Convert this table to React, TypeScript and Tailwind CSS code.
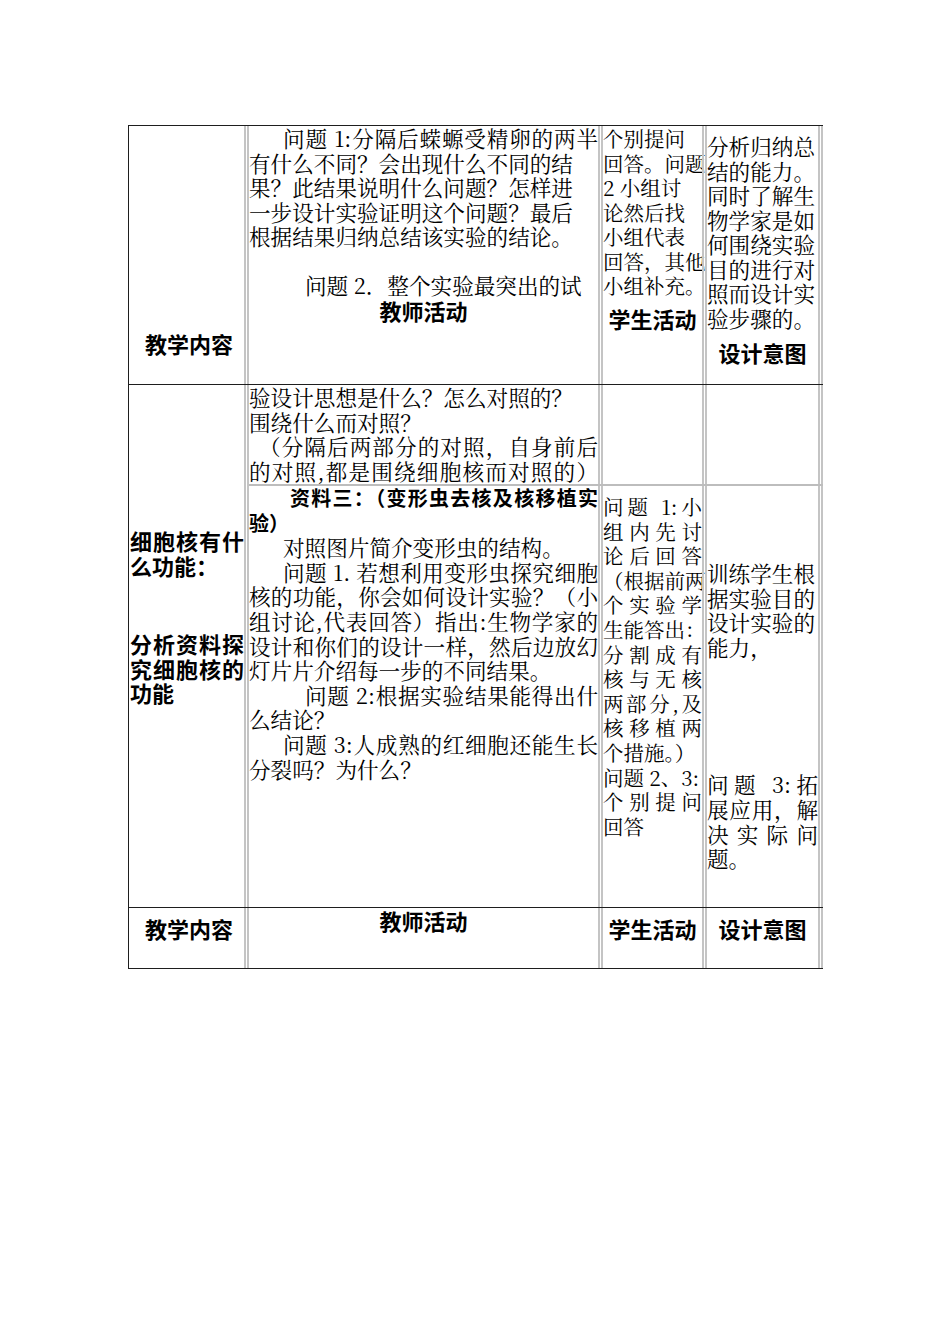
import type { ReactNode } from "react";

const SERIF = "font-['Noto_Serif_CJK_SC','Noto_Sans_CJK_SC','Liberation_Serif',serif]";
const HEAD = "font-['Noto_Sans_CJK_SC','Liberation_Sans',sans-serif] font-bold text-[22px]";

// double grey rule between columns
function Sep() {
  return <div className="w-[5px] shrink-0 self-stretch border-x-2 border-[#c4c4c4]" />;
}

// one printed line; justified lines are stretched to the cell width
function L({ children, j = false, c = "" }: { children: ReactNode; j?: boolean; c?: string }) {
  return (
    <div className={(j ? "text-justify [text-align-last:justify] " : "whitespace-nowrap ") + c}>
      {children}
    </div>
  );
}

export default function App() {
  return (
    <div className="min-h-screen bg-white pt-[125px] pl-[128px] text-black">
      <div className="w-[695px] border-t border-l border-[#1e1e1e]">
        {/* Row 1 */}
        <div className="flex h-[259px] border-b border-[#1e1e1e]">
          <div className={`w-[115px] shrink-0 pt-[205px] pl-[16px] leading-[24.5px] ${HEAD}`}>教学内容</div>
          <Sep />
          <div className={`w-[349px] shrink-0 text-[21.6px] leading-[24.5px] ${SERIF}`}>
            <L j c="pl-[34px]">问题 1:分隔后蝾螈受精卵的两半</L>
            <L>有什么不同？会出现什么不同的结</L>
            <L>果？此结果说明什么问题？怎样进</L>
            <L>一步设计实验证明这个问题？最后</L>
            <L>根据结果归纳总结该实验的结论。</L>
            <div className="h-[24.5px]" />
            <L c="pl-[56px]">问题 2．整个实验最突出的试</L>
            <div className={`text-center ${HEAD}`}>教师活动</div>
          </div>
          <Sep />
          <div className={`w-[99px] shrink-0 text-[20.5px] leading-[24.5px] ${SERIF}`}>
            <L>个别提问</L>
            <L>回答。问题</L>
            <L>2 小组讨</L>
            <L>论然后找</L>
            <L>小组代表</L>
            <L>回答，其他</L>
            <L>小组补充。</L>
            <div className={`mt-[8px] text-center ${HEAD}`}>学生活动</div>
          </div>
          <Sep />
          <div className={`w-[111px] shrink-0 pt-[8px] text-[21.6px] leading-[24.5px] ${SERIF}`}>
            <L>分析归纳总</L>
            <L>结的能力。</L>
            <L>同时了解生</L>
            <L>物学家是如</L>
            <L>何围绕实验</L>
            <L>目的进行对</L>
            <L>照而设计实</L>
            <L>验步骤的。</L>
            <div className={`mt-[10px] text-center ${HEAD}`}>设计意图</div>
          </div>
          <Sep />
        </div>

        {/* Row 2 */}
        <div className="flex h-[523px] border-b border-[#1e1e1e]">
          <div className={`w-[115px] shrink-0 pt-[143px] pl-[1px] leading-[24.6px] ${HEAD}`}>
            <L j>细胞核有什</L>
            <L>么功能：</L>
            <L j c="mt-[54px]">分析资料探</L>
            <L j>究细胞核的</L>
            <L>功能</L>
          </div>
          <Sep />
          <div className="flex w-[574px] shrink-0 flex-col">
            <div className="flex h-[99px]">
              <div className={`w-[349px] shrink-0 text-[21.6px] leading-[24.6px] ${SERIF}`}>
                <L>验设计思想是什么？怎么对照的？</L>
                <L>围绕什么而对照？</L>
                <L j c="pl-[10px]">（分隔后两部分的对照，自身前后</L>
                <L j>的对照,都是围绕细胞核而对照的）</L>
              </div>
              <Sep />
              <div className="w-[99px] shrink-0" />
              <Sep />
              <div className="w-[111px] shrink-0" />
              <Sep />
            </div>
            <div className="h-[2px] bg-[#bdbdbd]" />
            <div className="flex flex-1">
              <div className={`w-[349px] shrink-0 text-[21.6px] leading-[24.6px] ${SERIF}`}>
                <L j c={`pl-[41px] ${HEAD} text-[20px]!`}>资料三：（变形虫去核及核移植实</L>
                <L c={`${HEAD} text-[20px]!`}>验）</L>
                <L c="pl-[34px]">对照图片简介变形虫的结构。</L>
                <L j c="pl-[34px]">问题 1. 若想利用变形虫探究细胞</L>
                <L j>核的功能，你会如何设计实验？（小</L>
                <L j>组讨论,代表回答）指出:生物学家的</L>
                <L j>设计和你们的设计一样，然后边放幻</L>
                <L>灯片片介绍每一步的不同结果。</L>
                <L j c="pl-[56px]">问题 2:根据实验结果能得出什</L>
                <L>么结论？</L>
                <L j c="pl-[34px]">问题 3:人成熟的红细胞还能生长</L>
                <L>分裂吗？为什么？</L>
              </div>
              <Sep />
              <div className={`w-[99px] shrink-0 pt-[8px] text-[20.5px] leading-[24.6px] ${SERIF}`}>
                <L j>问题 1:小</L>
                <L j>组内先讨</L>
                <L j>论后回答</L>
                <L>（根据前两</L>
                <L j>个实验学</L>
                <L>生能答出：</L>
                <L j>分割成有</L>
                <L j>核与无核</L>
                <L j>两部分,及</L>
                <L j>核移植两</L>
                <L>个措施。）</L>
                <L>问题 2、3:</L>
                <L j>个别提问</L>
                <L>回答</L>
              </div>
              <Sep />
              <div className={`w-[111px] shrink-0 pt-[75px] text-[21.6px] leading-[24.6px] ${SERIF}`}>
                <L>训练学生根</L>
                <L>据实验目的</L>
                <L>设计实验的</L>
                <L>能力，</L>
                <L j c="mt-[113px]">问题 3:拓</L>
                <L j>展应用，解</L>
                <L j>决实际问</L>
                <L>题。</L>
              </div>
              <Sep />
            </div>
          </div>
        </div>

        {/* Row 3 */}
        <div className={`flex h-[61px] border-b border-[#1e1e1e] leading-[24.6px] ${HEAD}`}>
          <div className="w-[115px] shrink-0 pt-[8px] pl-[16px]">教学内容</div>
          <Sep />
          <div className="w-[349px] shrink-0 text-center">教师活动</div>
          <Sep />
          <div className="w-[99px] shrink-0 pt-[8px] text-center">学生活动</div>
          <Sep />
          <div className="w-[111px] shrink-0 pt-[8px] text-center">设计意图</div>
          <Sep />
        </div>
      </div>
    </div>
  );
}
